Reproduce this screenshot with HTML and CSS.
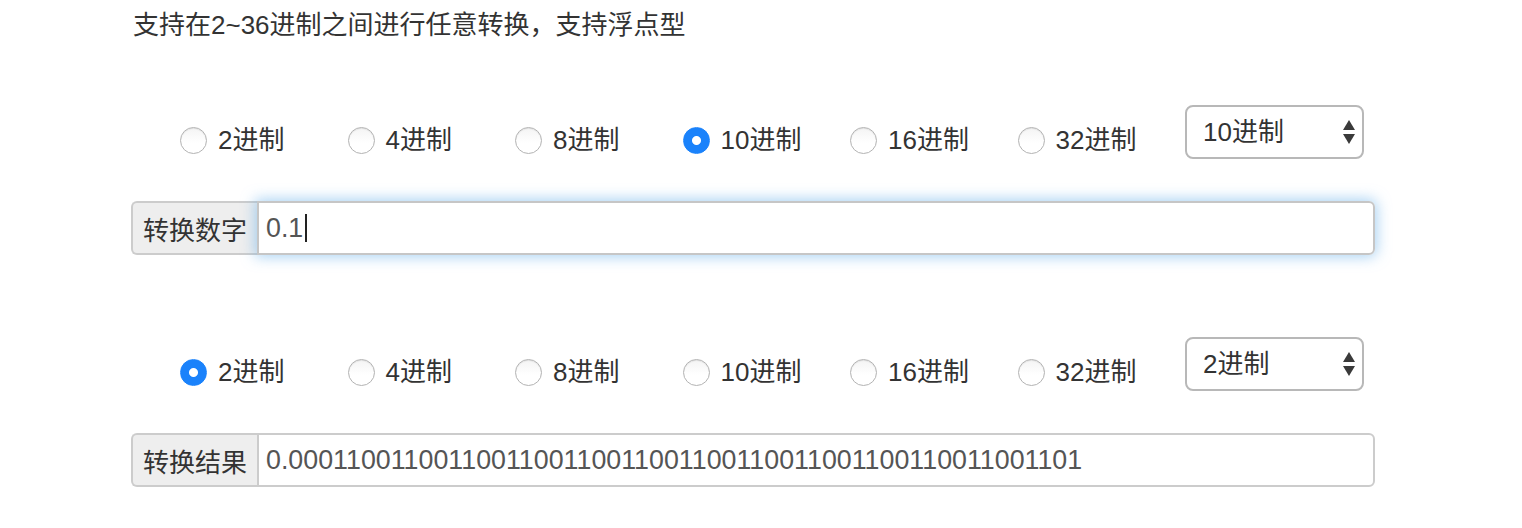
FILE: index.html
```html
<!DOCTYPE html>
<html lang="zh-CN">
<head>
    <meta charset="UTF-8">
    <meta name="viewport" content="width=device-width, initial-scale=1.0">
    <title>进制转换</title>
    <link rel="stylesheet" href="styles.css">
</head>
<body>
    <div class="page">
        <p class="intro">支持在2~36进制之间进行任意转换，支持浮点型</p>

        <!-- 输入 -->
        <div class="section">
            <div class="base-row">
                <div class="radio-list">
                    <label class="radio-item"><input type="radio" name="from" value="2">2进制</label>
                    <label class="radio-item"><input type="radio" name="from" value="4">4进制</label>
                    <label class="radio-item"><input type="radio" name="from" value="8">8进制</label>
                    <label class="radio-item"><input type="radio" name="from" value="10" checked>10进制</label>
                    <label class="radio-item"><input type="radio" name="from" value="16">16进制</label>
                    <label class="radio-item"><input type="radio" name="from" value="32">32进制</label>
                </div>
                <div class="select-wrap">
                    <select class="base-select">
                        <option>2进制</option>
                        <option selected>10进制</option>
                        <option>16进制</option>
                    </select>
                    <svg class="select-arrows" width="14" height="26" viewBox="0 0 14 26">
                        <path d="M7 1 L13 11 L1 11 Z" fill="#3a3a3a"/>
                        <path d="M1 15 L13 15 L7 25 Z" fill="#3a3a3a"/>
                    </svg>
                </div>
            </div>
            <div class="input-group">
                <span class="addon">转换数字</span>
                <div class="form-control focused">0.1<span class="caret-line"></span></div>
            </div>
        </div>

        <!-- 结果 -->
        <div class="section second">
            <div class="base-row">
                <div class="radio-list">
                    <label class="radio-item"><input type="radio" name="to" value="2" checked>2进制</label>
                    <label class="radio-item"><input type="radio" name="to" value="4">4进制</label>
                    <label class="radio-item"><input type="radio" name="to" value="8">8进制</label>
                    <label class="radio-item"><input type="radio" name="to" value="10">10进制</label>
                    <label class="radio-item"><input type="radio" name="to" value="16">16进制</label>
                    <label class="radio-item"><input type="radio" name="to" value="32">32进制</label>
                </div>
                <div class="select-wrap">
                    <select class="base-select">
                        <option selected>2进制</option>
                        <option>10进制</option>
                        <option>16进制</option>
                    </select>
                    <svg class="select-arrows" width="14" height="26" viewBox="0 0 14 26">
                        <path d="M7 1 L13 11 L1 11 Z" fill="#3a3a3a"/>
                        <path d="M1 15 L13 15 L7 25 Z" fill="#3a3a3a"/>
                    </svg>
                </div>
            </div>
            <div class="input-group">
                <span class="addon">转换结果</span>
                <div class="form-control">0.0001100110011001100110011001100110011001100110011001101</div>
            </div>
        </div>
    </div>
</body>
</html>
```

FILE: styles.css
```css
body {
    margin: 0;
    padding: 0;
    background-color: #fff;
    color: #333;
    font-family: "Liberation Sans", "Noto Sans CJK SC", sans-serif;
    font-size: 26px;
}

.page {
    width: 1244px;
    padding: 7px 0 0 131px;
}

.intro {
    margin: 0 0 62px;
    padding-left: 2px;
    line-height: 36px;
}

.section.second {
    margin-top: 82px;
}

.base-row {
    display: flex;
    height: 54px;
    margin-bottom: 42px;
}

.radio-list {
    display: grid;
    grid-template-columns: repeat(6, 167.5px);
    margin: 17px 0 0 49px;
    height: 36px;
}

.radio-item {
    display: flex;
    align-items: center;
    line-height: 36px;
    cursor: pointer;
}

.radio-item input {
    appearance: none;
    -webkit-appearance: none;
    width: 27px;
    height: 27px;
    margin: 0 11px 0 0;
    border-radius: 50%;
    border: 1px solid #b3b3b3;
    background: linear-gradient(#f4f4f4, #fff 60%);
    box-shadow: inset 0 1px 1px rgba(0, 0, 0, 0.08);
    box-sizing: border-box;
    flex: none;
}

.radio-item input:checked {
    border-color: #1a82fb;
    background: radial-gradient(circle, #fff 0, #fff 4px, #1a82fb 5px);
    box-shadow: none;
}

.select-wrap {
    position: relative;
    width: 179px;
    height: 54px;
}

.base-select {
    appearance: none;
    -webkit-appearance: none;
    width: 100%;
    height: 100%;
    padding: 0 0 0 16px;
    font-family: inherit;
    font-size: 26px;
    color: #333;
    background-color: #fff;
    border: 2px solid #b8b8b8;
    border-radius: 8px;
    box-sizing: border-box;
}

.select-arrows {
    position: absolute;
    right: 8px;
    top: 14px;
    pointer-events: none;
}

.input-group {
    display: flex;
    height: 54px;
}

.addon {
    display: flex;
    align-items: center;
    padding: 0 10px;
    background-color: #eee;
    color: #333;
    border: 2px solid #ccc;
    border-right: none;
    border-radius: 6px 0 0 6px;
}

.form-control {
    flex: 1;
    display: flex;
    align-items: center;
    padding: 0 7px;
    font-size: 26.8px;
    color: #555;
    border: 2px solid #ccc;
    border-radius: 0 6px 6px 0;
}

.form-control.focused {
    border-color: #c6c6c6;
    box-shadow: 0 0 14px 2px rgba(102, 175, 233, 0.55);
}

.caret-line {
    display: inline-block;
    width: 2px;
    height: 28px;
    margin-left: 2px;
    background-color: #222;
}
```
